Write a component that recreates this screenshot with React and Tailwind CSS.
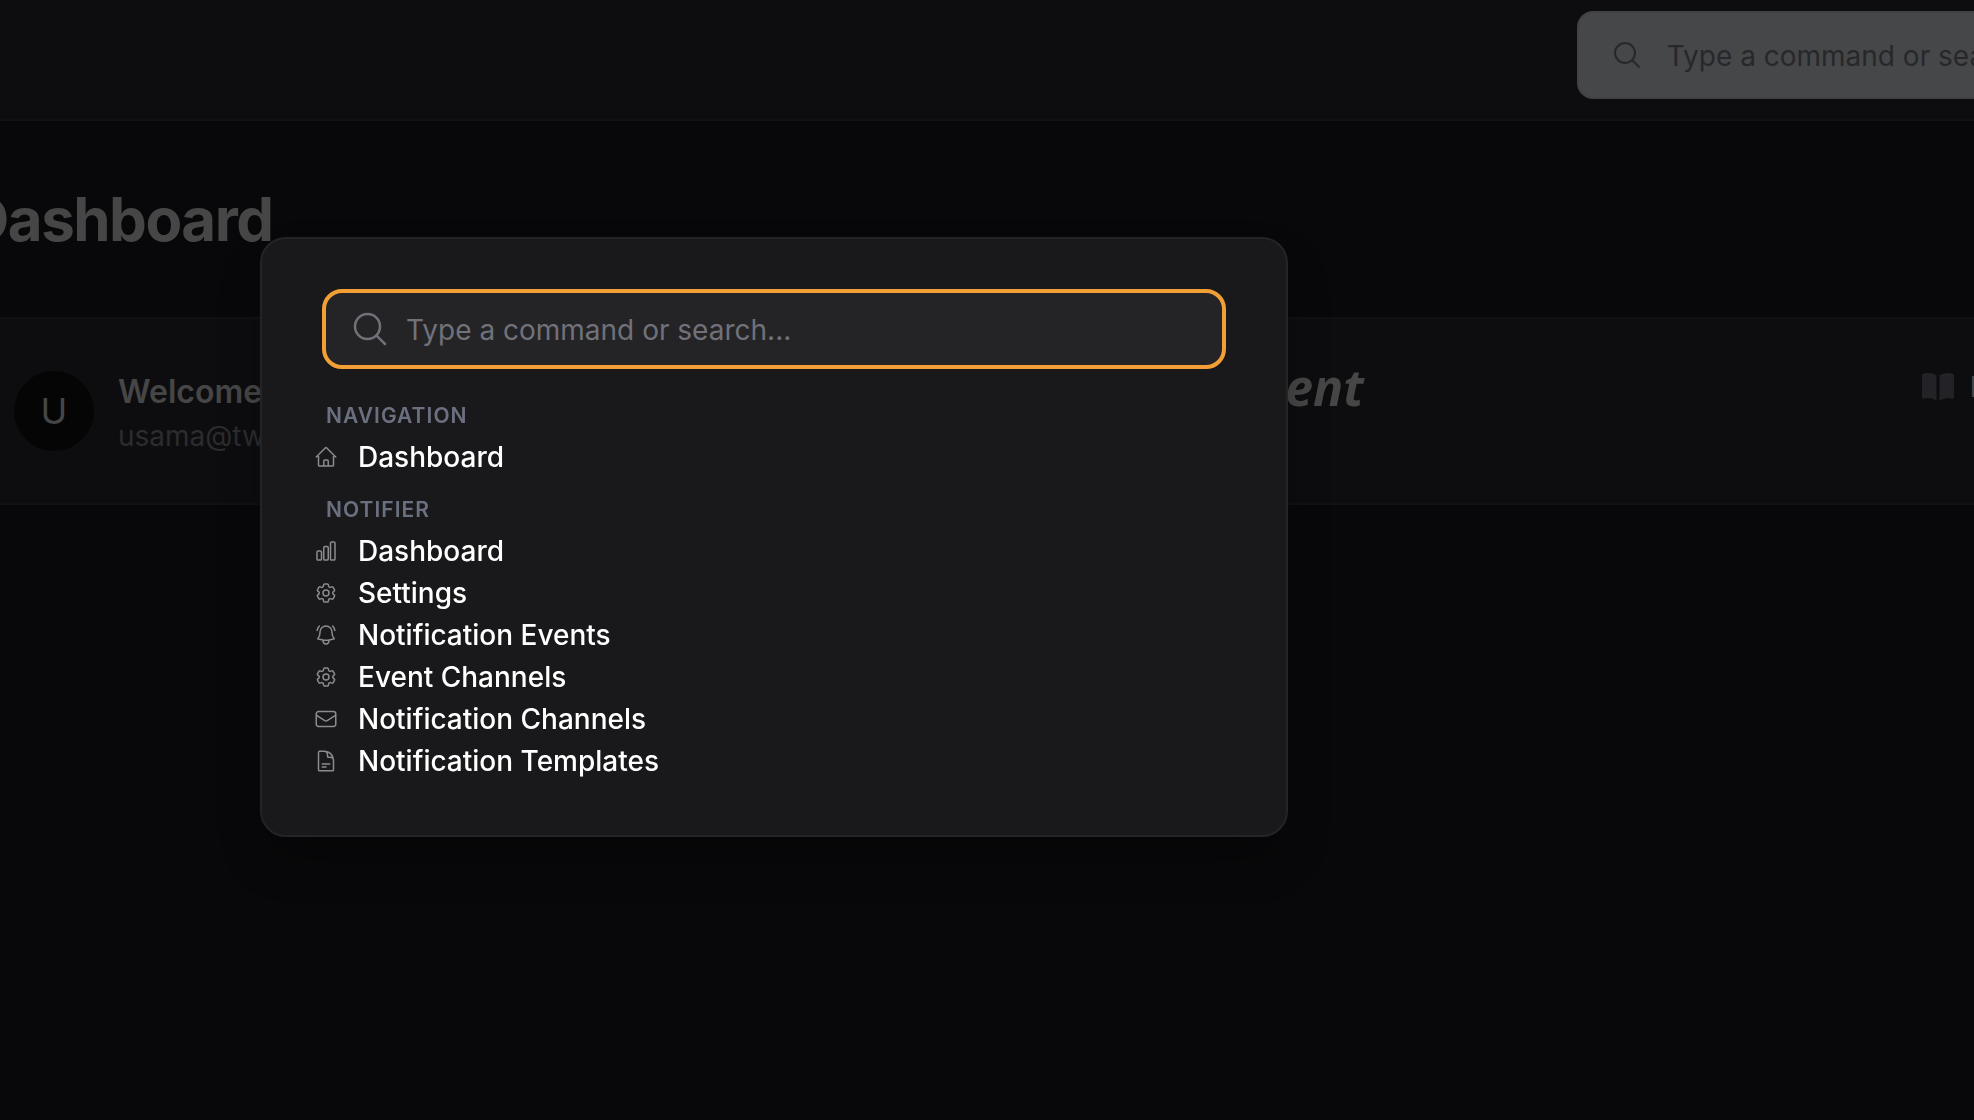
import React, { useState } from "react";
import {
  HiOutlineHome,
  HiOutlineChartBar,
  HiOutlineCog6Tooth,
  HiOutlineBellAlert,
  HiOutlineEnvelope,
  HiOutlineDocumentText,
  HiOutlineMagnifyingGlass,
} from "react-icons/hi2";

const groups = [
  {
    label: "Navigation",
    items: [{ name: "Dashboard", icon: HiOutlineHome }],
  },
  {
    label: "Notifier",
    items: [
      { name: "Dashboard", icon: HiOutlineChartBar },
      { name: "Settings", icon: HiOutlineCog6Tooth },
      { name: "Notification Events", icon: HiOutlineBellAlert },
      { name: "Event Channels", icon: HiOutlineCog6Tooth },
      { name: "Notification Channels", icon: HiOutlineEnvelope },
      { name: "Notification Templates", icon: HiOutlineDocumentText },
    ],
  },
];

function BookIcon() {
  return (
    <svg viewBox="0 0 20 20" fill="currentColor" className="size-10 shrink-0" aria-hidden="true">
      <path d="M10.75 16.82A7.462 7.462 0 0 1 15 15.5c.71 0 1.396.098 2.046.282A.75.75 0 0 0 18 15.06v-11a.75.75 0 0 0-.546-.721A9.006 9.006 0 0 0 15 3a8.963 8.963 0 0 0-4.25 1.065V16.82ZM9.25 4.065A8.963 8.963 0 0 0 5 3c-.85 0-1.673.118-2.454.339A.75.75 0 0 0 2 4.06v11a.75.75 0 0 0 .954.721A7.506 7.506 0 0 1 5 15.5c1.579 0 3.042.487 4.25 1.32V4.065Z" />
    </svg>
  );
}

function Header({ onOpen }) {
  return (
    <header className="flex h-[121px] items-start justify-end overflow-hidden border-b-2 border-[#111113] bg-[#0d0d0f] pt-[11px]">
      <button
        onClick={onOpen}
        className="-mr-30 flex h-[88px] shrink-0 items-center gap-6 rounded-2xl border-2 border-[#414244] bg-[#464749] pr-10 pl-8 text-[28px] whitespace-nowrap text-[#27282b]"
      >
        <HiOutlineMagnifyingGlass className="size-8" />
        <span className="pt-0.5">Type a command or search...</span>
      </button>
    </header>
  );
}

function WelcomeCard() {
  return (
    <section className="flex h-[188px] items-center overflow-hidden border-y-2 border-[#111113] bg-[#0d0d0f] pl-[14px]">
      <div className="flex size-20 shrink-0 items-center justify-center rounded-full bg-[#050505] text-4xl text-[#464646]">U</div>
      <div className="ml-6 flex-1 pt-0.5">
        <h2 className="text-[32px] leading-12 font-semibold text-[#464646]">Welcome</h2>
        <p className="text-[28px] leading-10 text-[#2c2c2f]">usama@tw</p>
      </div>
      <p className="mr-[554px] -mt-12 font-['Noto_Sans',sans-serif] text-[50px] leading-none font-bold text-[#464646] italic">ent</p>
      <a
        href="#docs"
        className="-mr-50 mb-12 flex shrink-0 items-center gap-3 text-[28px] font-medium text-[#464646]"
      >
        <span className="text-[#232327]"><BookIcon /></span>
        Documentation
      </a>
    </section>
  );
}

function CommandPalette() {
  const [query, setQuery] = useState("");

  const visible = groups
    .map((g) => ({ ...g, items: g.items.filter((i) => i.name.toLowerCase().includes(query.toLowerCase())) }))
    .filter((g) => g.items.length > 0);

  return (
    <div className="fixed inset-0 flex items-start pt-[237px] pl-[260px]">
      <div
        role="dialog"
        aria-label="Command palette"
        className="min-h-[600px] w-full max-w-[1028px] rounded-[26px] border-2 border-[#242426] bg-[#19191b] px-[52px] pt-[50px] pb-12 shadow-2xl shadow-black/40"
      >
        <label className="mx-2 flex h-20 items-center gap-4 rounded-[20px] border-4 border-[#f2a035] bg-[#242427] px-6 text-[#71717a]">
          <HiOutlineMagnifyingGlass className="size-10 shrink-0" />
          <input
            type="text"
            aria-label="Search commands"
            value={query}
            onChange={(e) => setQuery(e.target.value)}
            placeholder="Type a command or search..."
            className="w-full bg-transparent pt-0.5 text-[28px] text-white outline-none placeholder:text-[#71717a]"
          />
        </label>

        {/* Results */}
        <nav className="mt-[33px] flex flex-col gap-[18px]">
          {visible.map((group) => (
            <div key={group.label}>
              <h3 className="px-3 text-[21px] leading-7 font-semibold tracking-wider text-[#6b7080] uppercase">
                {group.label}
              </h3>
              <ul className="mt-1.5">
                {group.items.map(({ name, icon: Icon }) => (
                  <li key={name}>
                    <a href="#" className="flex h-[42px] items-center gap-5 text-[28px] font-medium text-white">
                      <Icon className="size-6 text-[#8c8c90]" />
                      {name}
                    </a>
                  </li>
                ))}
              </ul>
            </div>
          ))}
        </nav>
      </div>
    </div>
  );
}

export default function App() {
  const [open, setOpen] = useState(true);

  return (
    <div className="min-h-screen overflow-hidden bg-[#08080a] font-['Inter',sans-serif]">
      <Header onOpen={() => setOpen(true)} />
      <main>
        <h1 className="-ml-[34px] py-16 text-[60px] leading-[68px] font-bold tracking-tight text-[#464646]">Dashboard</h1>
        <WelcomeCard />
      </main>
      {open && <CommandPalette />}
    </div>
  );
}
